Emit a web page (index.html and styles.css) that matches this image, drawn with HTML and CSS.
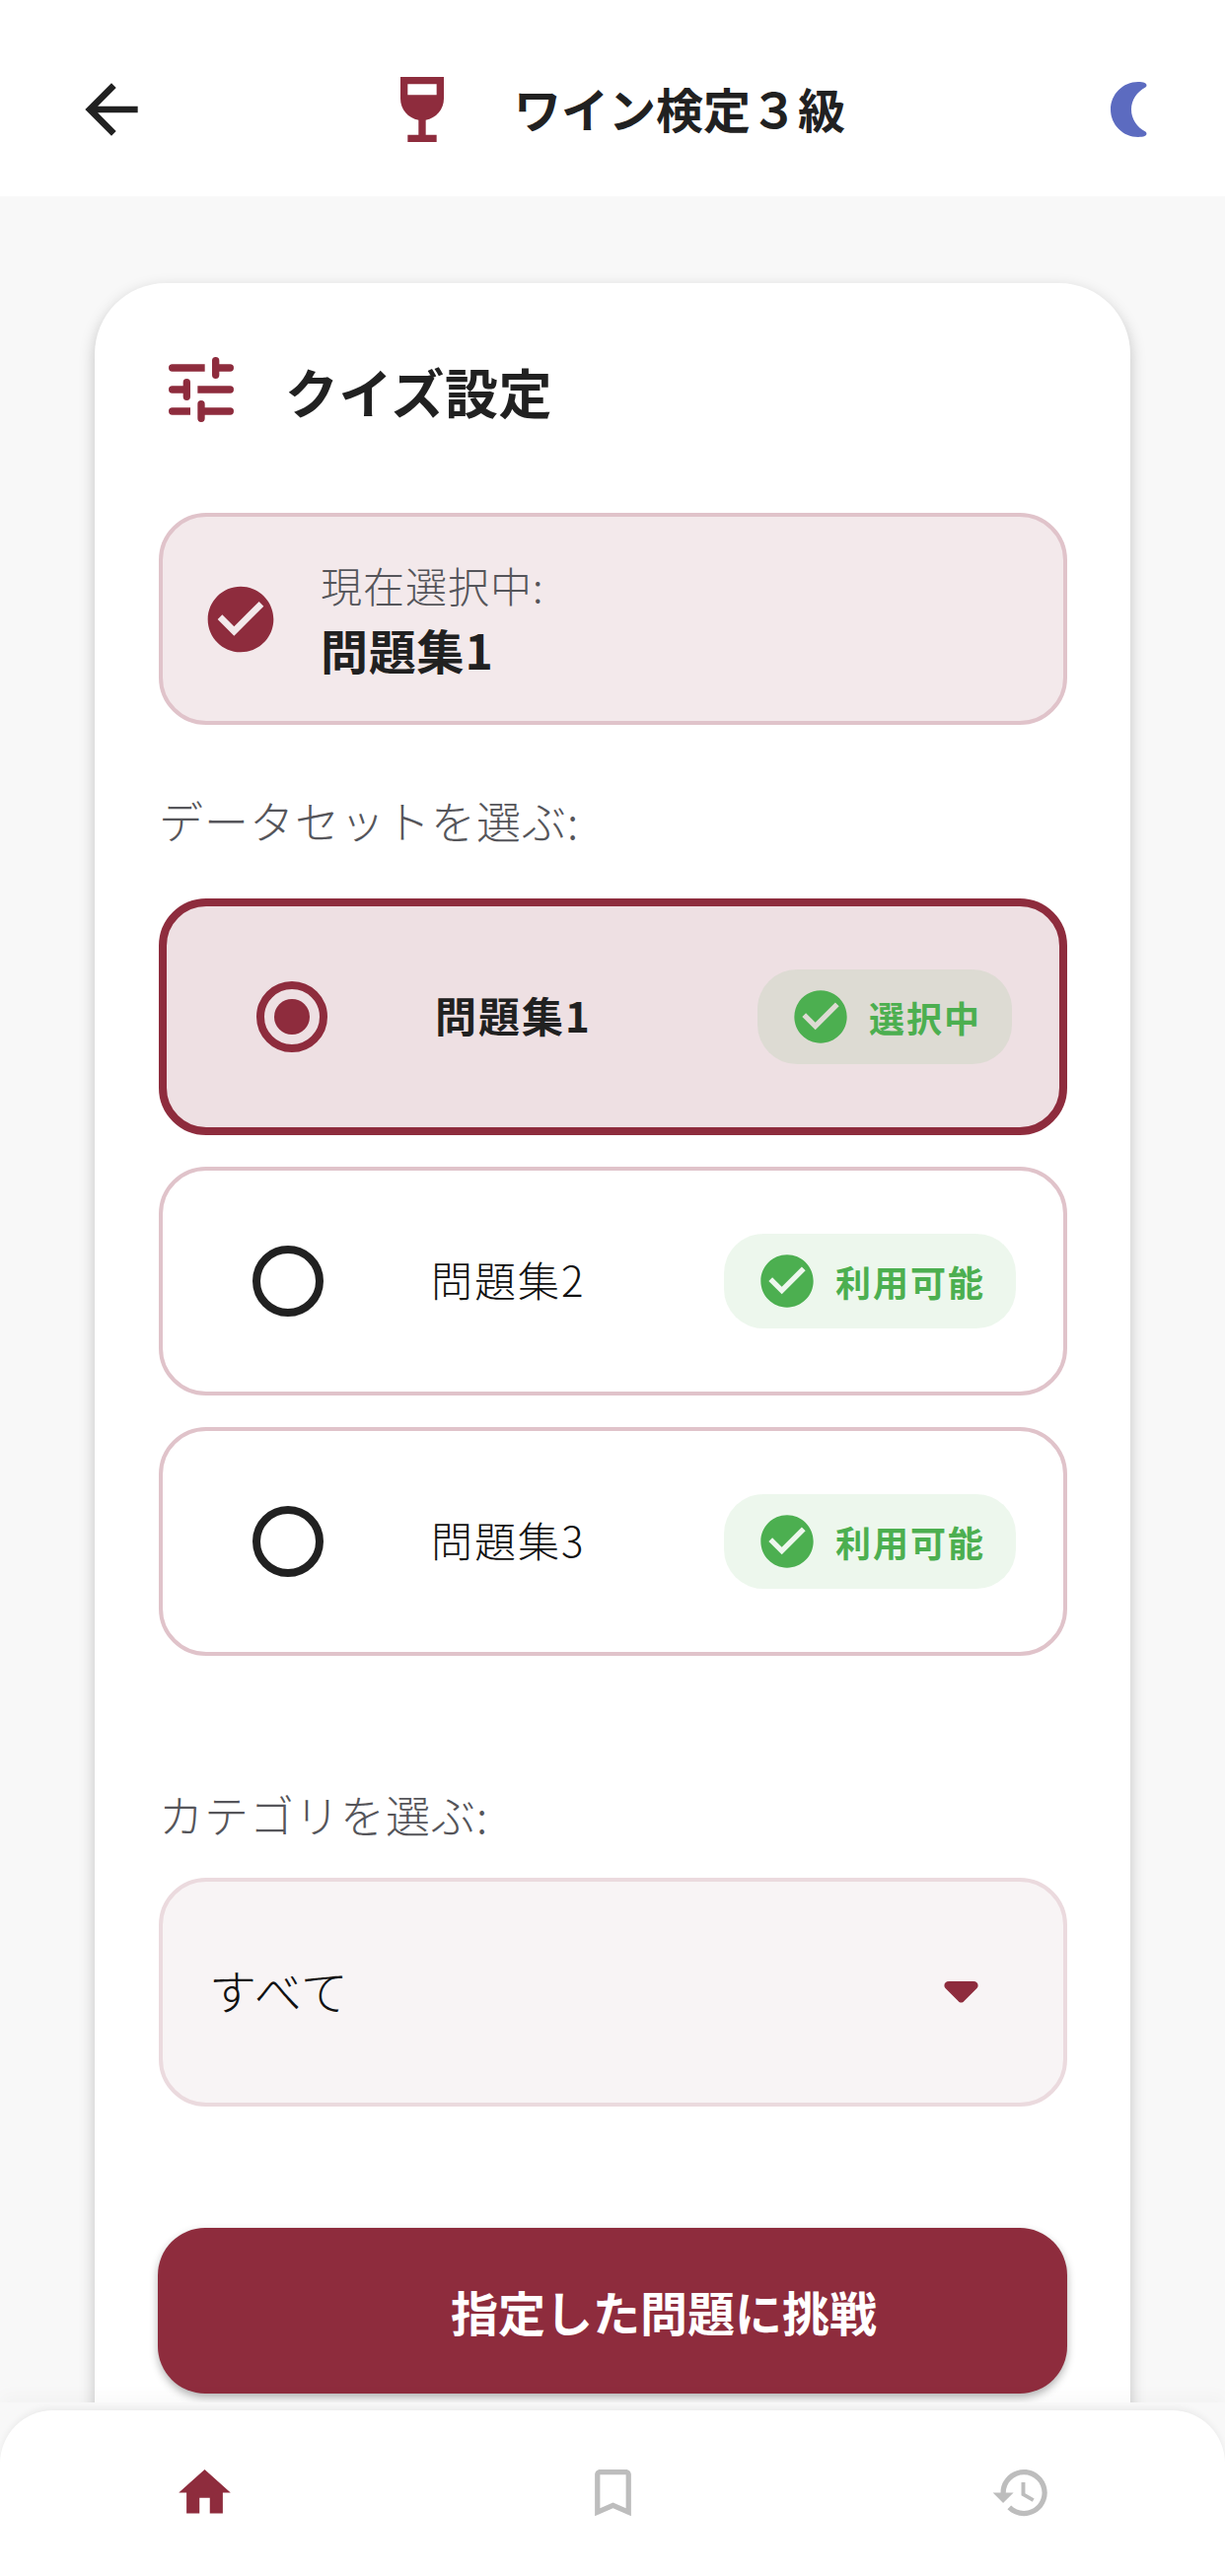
FILE: index.html
```html
<!DOCTYPE html>
<html lang="ja">
<head>
<meta charset="utf-8">
<title>ワイン検定３級</title>
<link rel="stylesheet" href="styles.css">
</head>
<body>
<div class="screen">
  <header class="appbar">
    <svg class="ic-back" viewBox="0 0 24 24"><path d="M20 11H7.830l5.590-5.590L12 4l-8 8 8 8 1.410-1.410L7.830 13H20v-2z"/></svg>
    <div class="appbar-title">
      <svg class="ic-wine" viewBox="0 0 24 24"><path d="M6 3v6c0 2.970 2.160 5.430 5 5.910V19H8v2h8v-2h-3v-4.090c2.840-.48 5-2.940 5-5.910V3H6zm10 5H8V5h8v3z"/></svg>
      <span class="title-text">ワイン検定３級</span>
    </div>
    <svg class="ic-moon" viewBox="0 0 37 56"><path d="M28 0C12.500 0 0 12.500 0 28s12.500 28 28 28c2.500 0 5-.3 6.500-.9 2.500-1 2.600-3.600.5-4.800C27 46 21 38 21 28S27 10 35 5.700c2.100-1.200 2-3.800-.5-4.800C33 .3 30.500 0 28 0z"/></svg>
  </header>
  <main class="content">
    <section class="card">
      <div class="card-head">
        <svg class="ic-tune" viewBox="0 0 24 24"><path d="M4 5h9v2H4a1 1 0 0 1 0-2zM16 3a1 1 0 0 1 1 1v1h3a1 1 0 0 1 0 2h-3v1a1 1 0 0 1-2 0V4a1 1 0 0 1 1-1zM4 11h3v-1a1 1 0 0 1 2 0v4a1 1 0 0 1-2 0v-1H4a1 1 0 0 1 0-2zM11 11h9a1 1 0 0 1 0 2h-9zM4 17h5v2H4a1 1 0 0 1 0-2zM12 15a1 1 0 0 1 1 1v1h7a1 1 0 0 1 0 2h-7v1a1 1 0 0 1-2 0v-4a1 1 0 0 1 1-1z"/></svg>
        <h1 class="card-title">クイズ設定</h1>
      </div>
      <div class="current">
        <svg class="ic-current" viewBox="0 0 24 24"><path d="M12 2C6.480 2 2 6.480 2 12s4.480 10 10 10 10-4.480 10-10S17.520 2 12 2zm-2 15l-5-5 1.410-1.410L10 14.170l7.590-7.590L19 8l-9 9z"/></svg>
        <div class="current-text">
          <div class="current-label">現在選択中:</div>
          <div class="current-value">問題集1</div>
        </div>
      </div>
      <div class="section-label label-data">データセットを選ぶ:</div>
      <div class="options">
        <div class="option selected">
          <span class="radio"><span class="dot"></span></span>
          <span class="option-name">問題集1</span>
          <span class="badge">
            <svg class="ic-badge" viewBox="0 0 24 24"><path d="M12 2C6.480 2 2 6.480 2 12s4.480 10 10 10 10-4.480 10-10S17.520 2 12 2zm-2 15l-5-5 1.410-1.410L10 14.170l7.590-7.590L19 8l-9 9z"/></svg>
            <span class="badge-text">選択中</span>
          </span>
        </div>
        <div class="option">
          <span class="radio"></span>
          <span class="option-name">問題集2</span>
          <span class="badge">
            <svg class="ic-badge" viewBox="0 0 24 24"><path d="M12 2C6.480 2 2 6.480 2 12s4.480 10 10 10 10-4.480 10-10S17.520 2 12 2zm-2 15l-5-5 1.410-1.410L10 14.170l7.590-7.590L19 8l-9 9z"/></svg>
            <span class="badge-text">利用可能</span>
          </span>
        </div>
        <div class="option">
          <span class="radio"></span>
          <span class="option-name">問題集3</span>
          <span class="badge">
            <svg class="ic-badge" viewBox="0 0 24 24"><path d="M12 2C6.480 2 2 6.480 2 12s4.480 10 10 10 10-4.480 10-10S17.520 2 12 2zm-2 15l-5-5 1.410-1.410L10 14.170l7.590-7.590L19 8l-9 9z"/></svg>
            <span class="badge-text">利用可能</span>
          </span>
        </div>
      </div>
      <div class="section-label label-cat">カテゴリを選ぶ:</div>
      <div class="select">
        <span class="select-value">すべて</span>
        <svg class="ic-caret" viewBox="0 0 35 22"><path d="M5 0h25c4 0 6 4 3.500 7L20.500 20c-1.600 2-4.400 2-6 0L1.500 7C-1 4 1 0 5 0z"/></svg>
      </div>
      <button class="cta"><span class="cta-text">指定した問題に挑戦</span></button>
    </section>
  </main>
  <div class="bottom-wrap">
    <nav class="bottom">
      <svg class="nav-ic active" viewBox="0 0 24 24"><path d="M10 20v-6h4v6h5v-8h3L12 3 2 12h3v8z"/></svg>
      <svg class="nav-ic" viewBox="0 0 24 24"><path d="M17 3H7c-1.100 0-2 .9-2 2v16l7-3 7 3V5c0-1.100-.9-2-2-2zm0 15l-5-2.180L7 18V5h10v13z"/></svg>
      <svg class="nav-ic" viewBox="0 0 24 24"><path d="M13 3c-4.970 0-9 4.030-9 9H1l3.890 3.890.07.14L9 12H6c0-3.870 3.130-7 7-7s7 3.130 7 7-3.130 7-7 7c-1.930 0-3.680-.79-4.940-2.060l-1.420 1.420C8.270 19.990 10.510 21 13 21c4.970 0 9-4.030 9-9s-4.030-9-9-9zm-1 5v5l4.280 2.540.72-1.210-3.500-2.080V8H12z"/></svg>
    </nav>
  </div>
</div>
</body>
</html>
```
FILE: styles.css
```css
* { box-sizing: border-box; }
html, body { margin: 0; padding: 0; }
body {
  width: 1242px;
  height: 2612px;
  overflow: hidden;
  font-family: "Noto Sans CJK JP", "Noto Sans", sans-serif;
  color: #212121;
  background: #f8f8f8;
}
.screen { width: 1242px; height: 2612px; display: flex; flex-direction: column; overflow: hidden; }
.appbar {
  height: 199px;
  flex: none;
  background: #fff;
  display: flex;
  align-items: center;
  padding: 22px 79px 0 73px;
}
.ic-back { width: 80px; height: 80px; fill: #212121; flex: none; }
.appbar-title { flex: 1; display: flex; align-items: center; margin-left: 231px; }
.ic-wine { width: 88px; height: 88px; fill: #8e2c3d; flex: none; }
.title-text { margin-left: 49px; font-size: 48px; font-weight: 700; line-height: 72px; margin-top: -4px; }
.ic-moon { width: 37px; height: 56px; fill: #5c6bc0; flex: none; }
.content { flex: 1; min-height: 0; overflow: hidden; padding: 88px 96px 0; }
.card {
  background: #fff;
  border-radius: 72px 72px 0 0;
  padding: 64px 64px 0 65px;
  height: 2300px;
  box-shadow: 0 6px 16px rgba(0,0,0,.22);
}
.card-head { display: flex; align-items: center; height: 88px; margin-left: -1px; }
.ic-tune { width: 88px; height: 88px; flex: none; fill: #8e2c3d; }
.card-title { margin: 0 0 0 41px; font-size: 54px; font-weight: 700; line-height: 80px; padding-top: 4px; letter-spacing: .5px; }
.current {
  margin-top: 81px;
  height: 215px;
  background: #f3e9eb;
  border: 4px solid #e0c3ca;
  border-radius: 48px;
  display: flex;
  align-items: center;
  padding-left: 39px;
}
.ic-current { width: 80px; height: 80px; fill: #8e2c3d; flex: none; }
.current-text { margin-left: 41px; }
.current-label { font-size: 42px; font-weight: 300; line-height: 60px; color: #55555a; letter-spacing: 1px; }
.current-value { font-size: 48px; font-weight: 700; line-height: 70px; letter-spacing: .8px; }
.section-label { font-size: 45px; font-weight: 300; line-height: 64px; color: #55555a; letter-spacing: 1px; }
.label-data { margin-top: 65px; }
.options { margin-top: 47px; display: flex; flex-direction: column; gap: 32px; }
.option {
  height: 232px;
  border: 4px solid #e0c3ca;
  border-radius: 48px;
  background: #fff;
  display: flex;
  align-items: center;
  padding: 0 48px 0 91px;
}
.option.selected { height: 240px; border: 8px solid #8e2c3d; background: #eee0e3; }
.radio {
  width: 72px; height: 72px;
  border: 8px solid #212121;
  border-radius: 50%;
  display: flex; align-items: center; justify-content: center;
  flex: none;
}
.selected .radio { border-color: #8e2c3d; }
.dot { width: 36px; height: 36px; border-radius: 50%; background: #8e2c3d; }
.option-name { margin-left: 109px; padding-bottom: 4px; font-size: 42px; font-weight: 300; color: #111; line-height: 60px; flex: 1; letter-spacing: 2px; }
.selected .option-name { font-weight: 700; color: #212121; }
.badge {
  height: 96px;
  border-radius: 40px;
  background: rgba(76,175,80,.1);
  display: flex;
  align-items: center;
  padding: 0 31px 0 32px;
  flex: none;
}
.ic-badge { width: 64px; height: 64px; fill: #4caf50; flex: none; }
.badge-text { margin-left: 17px; font-size: 36px; font-weight: 700; color: #4caf50; letter-spacing: 2px; line-height: 52px; }
.label-cat { margin-top: 129px; }
.select {
  margin-top: 32px;
  height: 232px;
  background: #f8f4f5;
  border: 4px solid #ebdade;
  border-radius: 48px;
  display: flex;
  align-items: center;
  padding: 0 86px 0 47px;
}
.select-value { flex: 1; font-size: 48px; font-weight: 300; color: #111; line-height: 70px; padding-bottom: 6px; letter-spacing: 1px; }
.ic-caret { width: 35px; height: 22px; fill: #8e2c3d; flex: none; }
.cta {
  display: block;
  width: 922px;
  height: 168px;
  margin: 123px 0 0 -1px;
  border: 0;
  border-radius: 48px;
  background: #8e2c3d;
  box-shadow: 0 4px 8px rgba(0,0,0,.3);
  color: #fff;
  font-family: inherit;
  font-size: 48px;
  font-weight: 700;
  padding: 0 0 0 104px;
}
.bottom-wrap {
  position: relative;
  flex: none;
  height: 176px;
  padding-top: 8px;
  background: #f8f8f8;
  box-shadow: 0 -8px 16px rgba(0,0,0,.025);
}
.bottom {
  height: 168px;
  background: #fff;
  border-radius: 54px 54px 0 0;
  box-shadow: 0 -3px 6px rgba(0,0,0,.05);
  display: grid;
  grid-template-columns: repeat(3, 1fr);
  justify-items: center;
  padding-top: 52px;
  align-items: start;
}
.nav-ic { width: 63px; height: 63px; fill: #bdbdbd; }
.nav-ic.active { fill: #8e2c3d; }
```
